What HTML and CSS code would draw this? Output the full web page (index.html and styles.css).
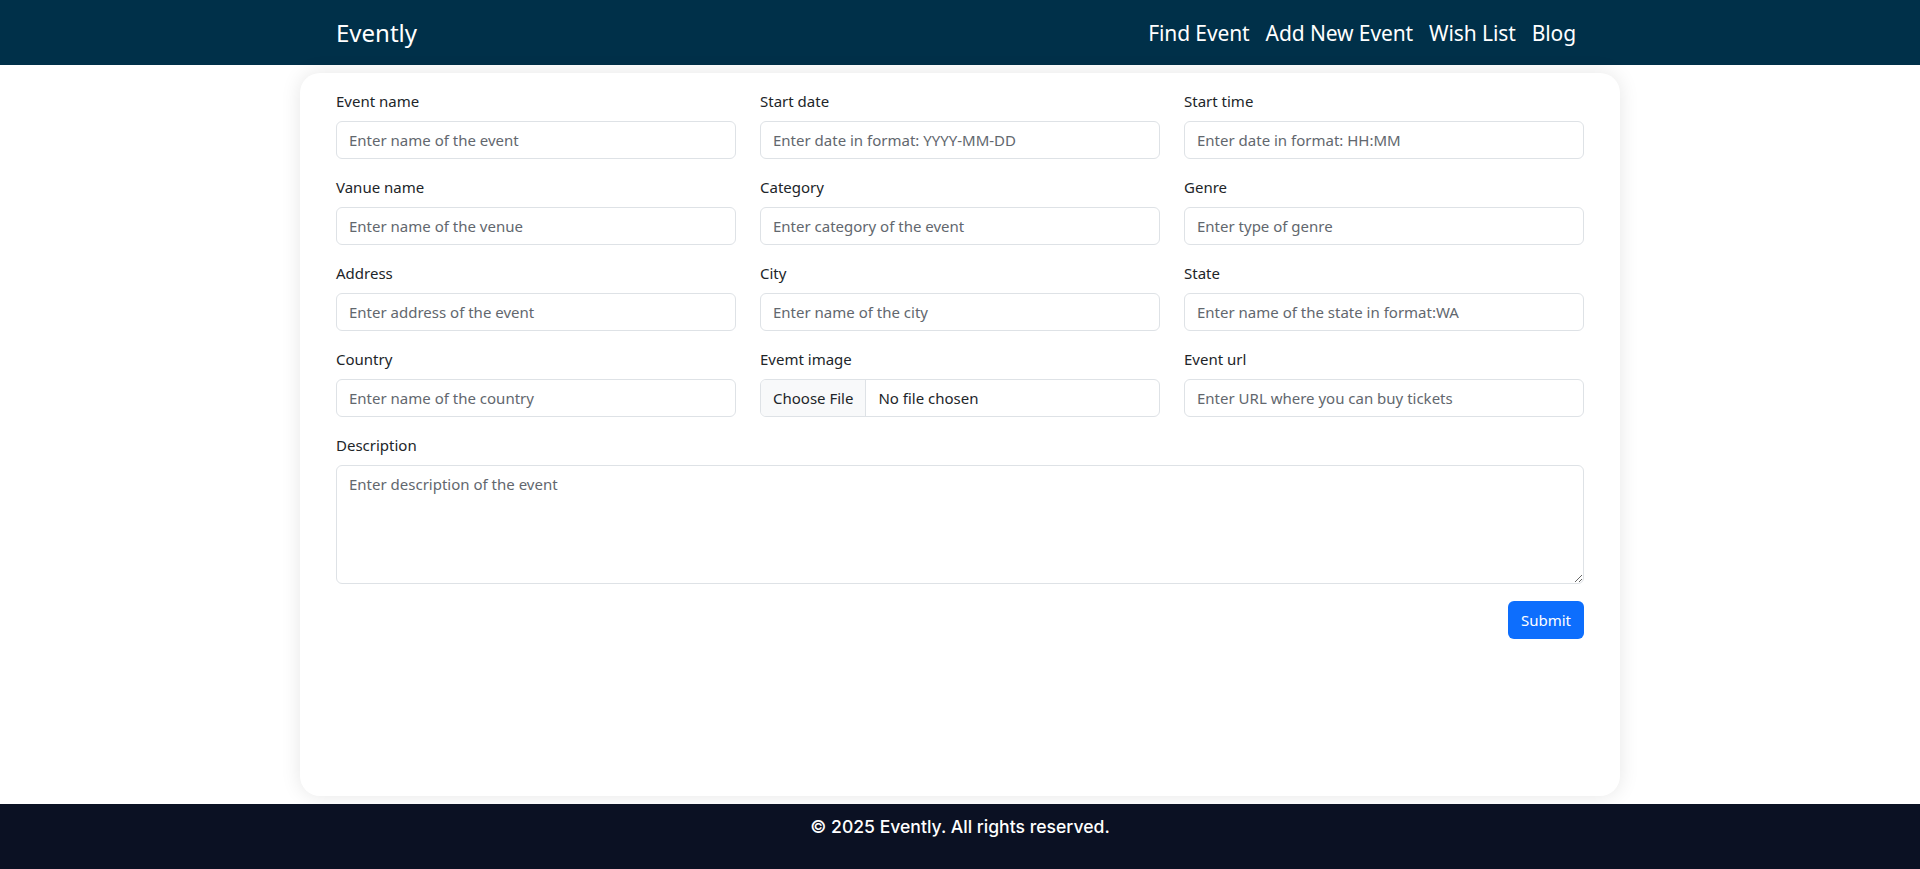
FILE: index.html
```html
<!DOCTYPE html>
<html lang="en">
<head>
<meta charset="utf-8">
<title>Evently - Add New Event</title>
<link rel="stylesheet" href="styles.css">
</head>
<body>
<header class="topbar">
  <div class="topbar-inner">
    <a class="brand" href="#">Evently</a>
    <nav class="nav">
      <a class="nav-link" href="#">Find Event</a>
      <a class="nav-link" href="#">Add New Event</a>
      <a class="nav-link" href="#">Wish List</a>
      <a class="nav-link" href="#">Blog</a>
    </nav>
  </div>
</header>
<main class="main">
  <form class="card">
    <div class="grid">
      <div class="field">
        <label class="label">Event name</label>
        <input class="control" type="text" placeholder="Enter name of the event">
      </div>
      <div class="field">
        <label class="label">Start date</label>
        <input class="control" type="text" placeholder="Enter date in format: YYYY-MM-DD">
      </div>
      <div class="field">
        <label class="label">Start time</label>
        <input class="control" type="text" placeholder="Enter date in format: HH:MM">
      </div>
      <div class="field">
        <label class="label">Vanue name</label>
        <input class="control" type="text" placeholder="Enter name of the venue">
      </div>
      <div class="field">
        <label class="label">Category</label>
        <input class="control" type="text" placeholder="Enter category of the event">
      </div>
      <div class="field">
        <label class="label">Genre</label>
        <input class="control" type="text" placeholder="Enter type of genre">
      </div>
      <div class="field">
        <label class="label">Address</label>
        <input class="control" type="text" placeholder="Enter address of the event">
      </div>
      <div class="field">
        <label class="label">City</label>
        <input class="control" type="text" placeholder="Enter name of the city">
      </div>
      <div class="field">
        <label class="label">State</label>
        <input class="control" type="text" placeholder="Enter name of the state in format:WA">
      </div>
      <div class="field">
        <label class="label">Country</label>
        <input class="control" type="text" placeholder="Enter name of the country">
      </div>
      <div class="field">
        <label class="label">Evemt image</label>
        <input class="control file" type="file">
      </div>
      <div class="field">
        <label class="label">Event url</label>
        <input class="control" type="text" placeholder="Enter URL where you can buy tickets">
      </div>
      <div class="field wide">
        <label class="label">Description</label>
        <textarea class="control area" placeholder="Enter description of the event"></textarea>
      </div>
    </div>
    <div class="actions">
      <button class="btn" type="button">Submit</button>
    </div>
  </form>
</main>
<footer class="footer">© 2025 Evently. All rights reserved.</footer>
</body>
</html>
```
FILE: styles.css
```css
* { box-sizing: border-box; }
html, body { margin: 0; padding: 0; }
body {
  background: #ffffff;
  font-family: "Noto Sans", "Open Sans", sans-serif;
  color: #212529;
  height: 869px;
  display: flex;
  flex-direction: column;
}
.topbar {
  background: #003049;
  height: 65px;
  flex: none;
}
.topbar-inner {
  width: 1248px;
  height: 65px;
  margin: 0 auto;
  display: flex;
  align-items: center;
  justify-content: space-between;
}
.brand {
  color: #ffffff;
  text-decoration: none;
  font-size: 24px;
  line-height: 30px;
}
.nav { display: flex; }
.nav-link {
  color: #ffffff;
  text-decoration: none;
  font-size: 21px;
  line-height: 30px;
  padding: 0 8px;
  letter-spacing: -0.1px;
}
.main { flex: 1; }
.card {
  width: 1320px;
  height: 723px;
  margin: 8px auto;
  background: #ffffff;
  border-radius: 20px;
  box-shadow: 0 0 20px rgba(0, 0, 0, 0.1);
  padding: 16px 36px;
}
.grid {
  display: grid;
  grid-template-columns: repeat(3, 1fr);
  column-gap: 24px;
  row-gap: 16px;
}
.field { display: flex; flex-direction: column; }
.wide { grid-column: 1 / -1; }
.label {
  font-size: 15px;
  line-height: 24px;
  margin-bottom: 8px;
  color: #212529;
}
.control {
  height: 38px;
  border: 1px solid #dee2e6;
  border-radius: 6px;
  padding: 6px 12px;
  font-family: "Noto Sans", "Open Sans", sans-serif;
  font-size: 15px;
  line-height: 24px;
  color: #212529;
  background: #ffffff;
  width: 100%;
}
.control::placeholder { color: #62676e; }
.file {
  padding: 0;
  overflow: hidden;
  line-height: 36px;
}
.file::file-selector-button {
  height: 36px;
  margin: 0 12px 0 0;
  padding: 0 12px;
  border: 0;
  border-right: 1px solid #dee2e6;
  border-radius: 0;
  background: #f8f9fa;
  color: #212529;
  font-family: "Noto Sans", "Open Sans", sans-serif;
  font-size: 15px;
}
.area {
  height: 119px;
  resize: vertical;
}
.actions {
  display: flex;
  justify-content: flex-end;
  margin-top: 17px;
}
.btn {
  height: 38px;
  width: 76px;
  border: 0;
  border-radius: 6px;
  background: #0d6efd;
  color: #ffffff;
  font-family: "Noto Sans", "Open Sans", sans-serif;
  font-size: 15px;
  padding: 0;
}
.footer {
  flex: none;
  height: 65px;
  background: #0b1123;
  color: #ffffff;
  text-align: center;
  font-family: Inter, "Noto Sans", sans-serif;
  font-size: 17.6px;
  font-weight: 500;
  line-height: 24px;
  padding-top: 11px;
}
```
